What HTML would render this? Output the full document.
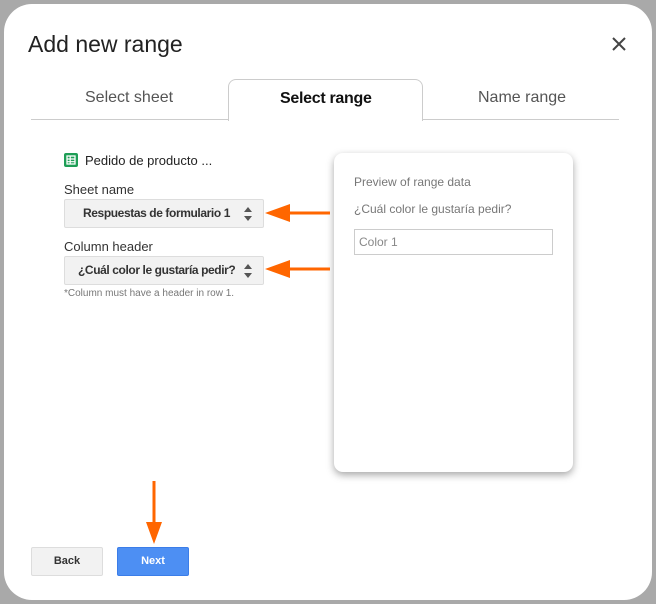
<!DOCTYPE html>
<html><head><style>
body{margin:0;width:656px;height:604px;background:#a9a9a9;position:relative;overflow:hidden;font-family:"Liberation Sans",sans-serif;}
.dlg{position:absolute;left:4px;top:4px;width:648px;height:596px;background:#fff;border-radius:28px;}
.a{position:absolute;}
.sel{position:absolute;left:64px;width:198px;height:27px;background:#f2f2f2;border:1px solid #ddd;border-radius:2px;}
.sel .t{position:absolute;top:0;font-size:12px;font-weight:bold;color:#333;line-height:27px;letter-spacing:-0.4px;white-space:nowrap}
</style></head><body>
<div class="dlg"></div>
<div class="a" style="left:28px;top:31px;font-size:23px;color:#222;">Add new range</div>
<svg class="a" style="left:612px;top:37px" width="14" height="14"><path d="M1 1L13 13M13 1L1 13" stroke="#444" stroke-width="2"/></svg>
<div class="a" style="left:31px;top:119px;width:588px;height:1px;background:#ccc"></div>
<div class="a" style="left:228px;top:79px;width:193px;height:41px;border:1px solid #ccc;border-bottom:none;border-radius:8px 8px 0 0;background:#fff"></div>
<div class="a" style="left:85px;top:89px;font-size:16px;color:#555">Select sheet</div>
<div class="a" style="left:280px;top:90px;font-size:16px;font-weight:bold;color:#111;letter-spacing:-0.3px">Select range</div>
<div class="a" style="left:478px;top:89px;font-size:16px;color:#555">Name range</div>
<svg class="a" style="left:64px;top:153px" width="14" height="14"><rect width="14" height="14" rx="2" fill="#1e9e56"/><rect x="3" y="3" width="8" height="8" fill="none" stroke="#fff" stroke-width="1.3"/><path d="M3 6h8M3 8.7h8M6.2 3v8" stroke="#fff" stroke-width="1.2"/></svg>
<div class="a" style="left:85px;top:153px;font-size:13px;color:#222">Pedido de producto ...</div>
<div class="a" style="left:64px;top:182px;font-size:13px;color:#333">Sheet name</div>
<div class="sel" style="top:199px"><span class="t" style="left:18px">Respuestas de formulario 1</span></div>
<div class="a" style="left:64px;top:239px;font-size:13px;color:#333">Column header</div>
<div class="sel" style="top:256px"><span class="t" style="left:13px">¿Cuál color le gustaría pedir?</span></div>
<svg class="a" style="left:244px;top:207px" width="8" height="14"><path d="M0 5L4 0L8 5ZM0 9L4 14L8 9Z" fill="#555"/></svg>
<svg class="a" style="left:244px;top:264px" width="8" height="14"><path d="M0 5L4 0L8 5ZM0 9L4 14L8 9Z" fill="#555"/></svg>
<div class="a" style="left:64px;top:288px;font-size:10px;color:#777">*Column must have a header in row 1.</div>
<div class="a" style="left:334px;top:153px;width:239px;height:319px;background:#fff;border-radius:9px;box-shadow:0 3px 8px rgba(0,0,0,.35)"></div>
<div class="a" style="left:354px;top:175px;font-size:12px;color:#777">Preview of range data</div>
<div class="a" style="left:354px;top:202px;font-size:12px;color:#777">¿Cuál color le gustaría pedir?</div>
<div class="a" style="left:354px;top:229px;width:197px;height:24px;border:1px solid #ccc;font-size:12px;color:#888;line-height:24px;text-indent:4px">Color 1</div>
<svg class="a" style="left:0;top:0" width="656" height="604">
<path d="M330 213H285M330 269H285M154 481V525" stroke="#ff6600" stroke-width="3"/>
<path d="M265 213L290 204V222ZM265 269L290 260V278ZM154 544L146 522H162Z" fill="#ff6600"/>
</svg>
<div class="a" style="left:31px;top:547px;width:70px;height:27px;background:#f2f2f2;border:1px solid #ddd;border-radius:2px;font-size:11px;font-weight:bold;color:#333;text-align:center;line-height:27px">Back</div>
<div class="a" style="left:117px;top:547px;width:70px;height:27px;background:#4d8ff3;border:1px solid #3b7de8;border-radius:2px;font-size:11px;font-weight:bold;color:#fff;text-align:center;line-height:27px">Next</div>
</body></html>
